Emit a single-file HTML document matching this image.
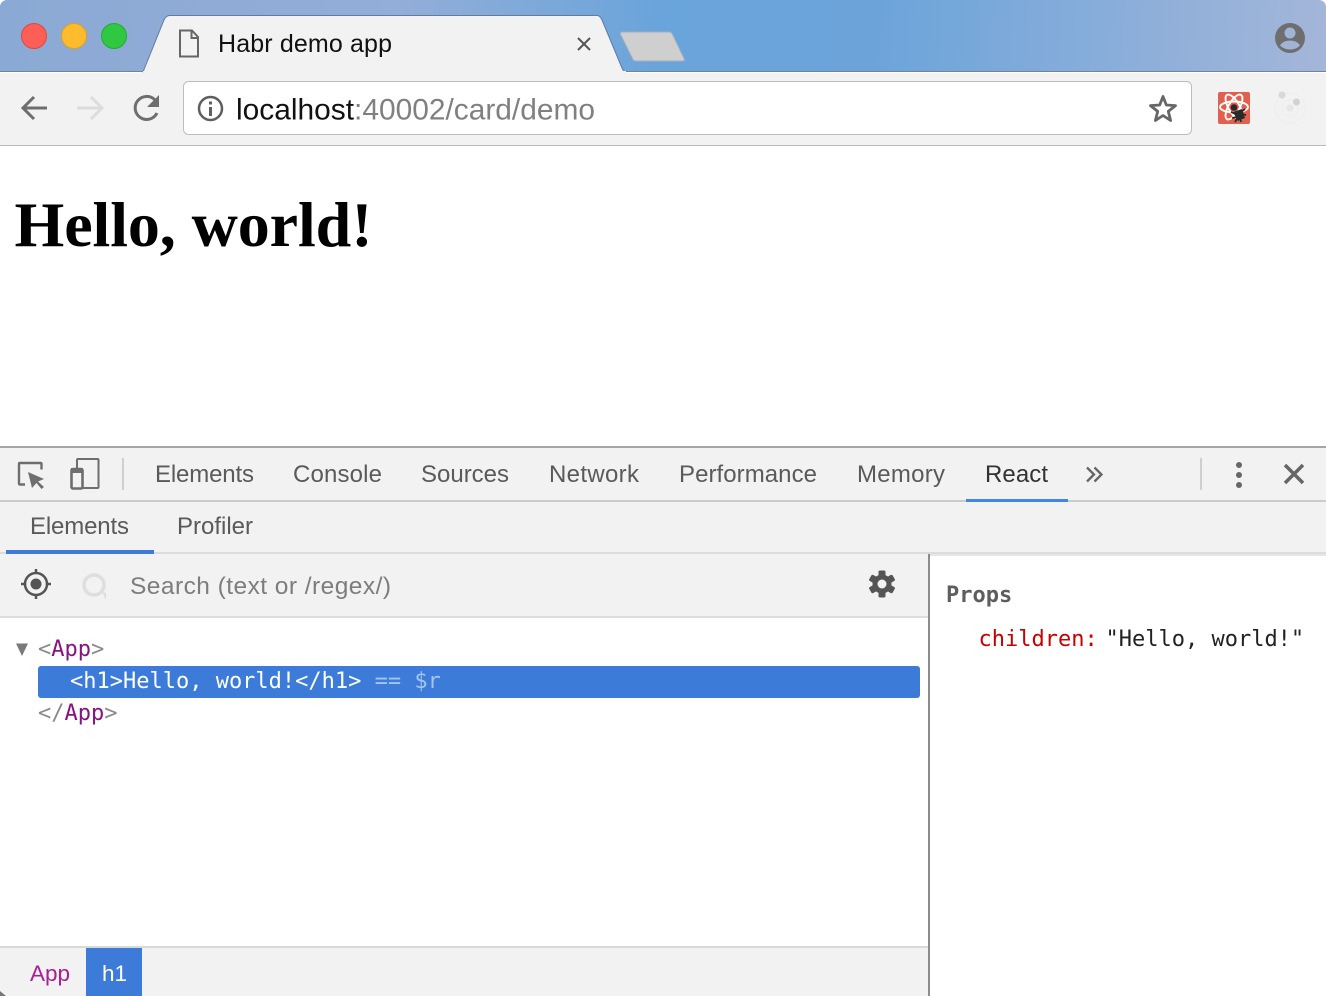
<!DOCTYPE html>
<html><head><meta charset="utf-8"><style>
html,body{margin:0;padding:0;background:#fff;width:1326px;height:996px;overflow:hidden}
svg{display:block}
.s{font-family:"Liberation Sans",sans-serif}
.m{font-family:"DejaVu Sans Mono",monospace;font-size:22px}
.t{font-size:24px;fill:#5a5a5a}
</style></head><body>
<svg width="1326" height="996" viewBox="0 0 1326 996" xmlns="http://www.w3.org/2000/svg">
<defs><linearGradient id="g" gradientUnits="userSpaceOnUse" x1="0" y1="0" x2="1326" y2="72">
<stop offset="0" stop-color="#8aa9d4"/><stop offset=".3" stop-color="#93aed8"/><stop offset=".5" stop-color="#69a4da"/><stop offset=".66" stop-color="#6ca4da"/><stop offset="1" stop-color="#a4b6d9"/></linearGradient></defs>
<rect width="1326" height="996" fill="#fff"/>
<!-- title bar -->
<rect width="1326" height="72" fill="url(#g)"/>
<path d="M0 6V0H6Q1 1 0 6ZM1326 6V0H1320Q1325 1 1326 6Z" fill="#fff"/>
<rect y="71" width="1326" height="1" fill="#6f83a3"/>
<circle cx="34" cy="36" r="12.500" fill="#fd5f57" stroke="#e2463f"/>
<circle cx="74" cy="36" r="12.500" fill="#febb2e" stroke="#dfa023"/>
<circle cx="114" cy="36" r="12.500" fill="#2fc840" stroke="#24ab30"/>
<!-- tab -->
<path d="M143 72L164 20Q166 15.500 170 15.500H597Q600 15.500 602 20L622 68Q623.500 71.500 626 72Z" fill="#f2f2f2" stroke="#5f7ca3" stroke-width="1"/>
<rect x="143" y="71" width="483" height="2" fill="#f2f2f2"/>
<path d="M180 30.500H192L198 37V56.500H180ZM191.500 31V38H198" fill="none" stroke="#666" stroke-width="2"/>
<text x="218" y="52" class="s" font-size="25" fill="#111" textLength="174" lengthAdjust="spacing">Habr demo app</text>
<path d="M578 38L590 50M590 38L578 50" stroke="#555" stroke-width="2" fill="none"/>
<path d="M622.500 32H669Q671.500 32 672.500 34.500L684 58.500Q685 61 682.500 61H636Q633.500 61 632.500 58.500L620.500 34.500Q620 32 622.500 32Z" fill="#cfcfcf" stroke="#9fb0c6" stroke-width="1"/>
<!-- avatar -->
<circle cx="1290" cy="38" r="15" fill="#6e6e6e"/>
<circle cx="1290" cy="33" r="5.500" fill="#a1b4d8"/>
<path d="M1280 45.500Q1283 40.500 1290 40.500Q1297 40.500 1300 45.500Q1296 49.500 1290 49.500Q1284 49.500 1280 45.500Z" fill="#a1b4d8"/>
<!-- toolbar -->
<rect y="73" width="1326" height="72" fill="#f2f2f2"/>
<rect y="145" width="1326" height="1" fill="#b9b9b9"/>
<path d="M47 108H23M34 97L23 108L34 119" fill="none" stroke="#6e6e6e" stroke-width="3"/>
<path d="M77 108H102M91 97L102 108L91 119" fill="none" stroke="#dcdcdc" stroke-width="3"/>
<path d="M157 113A11.500 11.500 0 1 1 155 100" fill="none" stroke="#6e6e6e" stroke-width="3"/>
<path d="M159 95V107H147Z" fill="#6e6e6e"/>
<rect x="183.500" y="81.500" width="1008" height="53" rx="5" fill="#fff" stroke="#bdbdbd"/>
<circle cx="210.500" cy="108.500" r="11.500" fill="none" stroke="#5f5f5f" stroke-width="2.500"/>
<rect x="209" y="107" width="3" height="9" fill="#5f5f5f"/><rect x="209" y="101.500" width="3" height="3" fill="#5f5f5f"/>
<text x="236" y="119.500" class="s" font-size="29.900" fill="#111" textLength="359">localhost<tspan fill="#808080">:40002/card/demo</tspan></text>
<path d="M1163 96.500L1166.300 105L1175.500 105.600L1168.300 111.400L1170.600 120.500L1163 115.500L1155.400 120.500L1157.700 111.400L1150.500 105.600L1159.700 105Z" fill="none" stroke="#666" stroke-width="2.800" stroke-linejoin="round"/>
<!-- react ext -->
<rect x="1218" y="92" width="32" height="32" rx="2" fill="#e2604d"/>
<g fill="none" stroke="#fff" stroke-width="1.900">
<ellipse cx="1234" cy="107" rx="14" ry="5.500"/>
<ellipse cx="1234" cy="107" rx="14" ry="5.500" transform="rotate(60 1234 107)"/>
<ellipse cx="1234" cy="107" rx="14" ry="5.500" transform="rotate(120 1234 107)"/></g>
<circle cx="1234" cy="107.500" r="3.300" fill="#2a2a2a"/>
<path d="M1233 112L1242 109L1245 118L1238 121Z" fill="#2a2a2a"/>
<path d="M1231 112L1236 114M1232 118L1237 117M1235 122L1238 117M1241 122L1240 116M1246 115L1241 114M1245 109L1241 112" stroke="#2a2a2a" stroke-width="1.800"/>
<!-- dim ext -->
<circle cx="1290" cy="108" r="15" fill="none" stroke="#ececec" stroke-width="1.500" stroke-dasharray="2 1.500"/>
<circle cx="1290" cy="108" r="8" fill="none" stroke="#ececec" stroke-width="1.500" stroke-dasharray="2 1.500"/>
<circle cx="1290" cy="108" r="3.500" fill="#e6e6e6"/>
<circle cx="1282" cy="95" r="3.500" fill="#d8d8d8"/>
<circle cx="1296.500" cy="102" r="3.500" fill="#d2d2d2"/>
<!-- page -->
<text x="14.500" y="246" font-family="'Liberation Serif',serif" font-weight="bold" font-size="64" fill="#000" textLength="358">Hello, world!</text>
<!-- devtools top -->
<rect y="446" width="1326" height="2" fill="#a5a5a5"/>
<rect y="448" width="1326" height="106" fill="#f2f2f2"/>
<rect y="500" width="1326" height="2" fill="#cbcbcb"/>
<path d="M25 484.500H20Q19 484.500 19 483.500V464Q19 463 20 463H40.500Q41.500 463 41.500 464V469.500" fill="none" stroke="#6e6e6e" stroke-width="2.400"/>
<path d="M28 472L44 479L38 481.500L44 487L41.500 489L36.500 483L32 488Z" fill="#6e6e6e"/>
<path d="M77 468V460Q77 459 78 459H97.500Q98.500 459 98.500 460V487Q98.500 488 97.500 488H83" fill="none" stroke="#6e6e6e" stroke-width="2"/>
<rect x="71.500" y="469" width="11" height="19.500" rx="1.500" fill="none" stroke="#6e6e6e" stroke-width="2.600"/>
<rect x="71" y="468" width="12" height="5" fill="#6e6e6e"/>
<rect x="122" y="458" width="2" height="32" fill="#cfcfcf"/>
<g class="s t">
<text x="155" y="482" class="s t" textLength="99">Elements</text>
<text x="293" y="482" class="s t" textLength="89">Console</text>
<text x="421" y="482" class="s t" textLength="88">Sources</text>
<text x="549" y="482" class="s t" textLength="90">Network</text>
<text x="679" y="482" class="s t" textLength="138">Performance</text>
<text x="857" y="482" class="s t" textLength="88">Memory</text>
<text x="985" y="482" class="s t" style="fill:#333" textLength="63">React</text>
</g>
<rect x="966" y="499" width="102" height="3" fill="#4285e8"/>
<path d="M1087 467.500L1094 474.500L1087 481.500M1094.500 467.500L1101.500 474.500L1094.500 481.500" fill="none" stroke="#666" stroke-width="2.300"/>
<rect x="1200" y="458" width="2" height="32" fill="#cfcfcf"/>
<circle cx="1239" cy="465" r="3" fill="#666"/><circle cx="1239" cy="475" r="3" fill="#666"/><circle cx="1239" cy="485" r="3" fill="#666"/>
<path d="M1285 465L1303 483M1303 465L1285 483" stroke="#666" stroke-width="3.500"/>
<!-- sub tabs -->
<rect y="552" width="1326" height="2" fill="#dcdcdc"/>
<rect x="6" y="550" width="148" height="4" fill="#3c7cd8"/>
<text x="30" y="534" class="s t" textLength="99">Elements</text>
<text x="177" y="534" class="s t" textLength="76">Profiler</text>
<!-- search -->
<rect y="554" width="929" height="62" fill="#f2f2f2"/>
<rect y="616" width="929" height="2" fill="#dcdcdc"/>
<rect x="929" y="554" width="397" height="2" fill="#e6e6e6"/>
<circle cx="36" cy="584" r="11" fill="none" stroke="#555" stroke-width="2.500"/>
<circle cx="36" cy="584" r="5.500" fill="#555"/>
<path d="M36 569V574M36 594V599M21 584H26M46 584H51" stroke="#555" stroke-width="2.500"/>
<circle cx="94" cy="585" r="10" fill="none" stroke="#dedede" stroke-width="3.500"/>
<path d="M102 592L106 600V593Z" fill="#dedede"/>
<text x="130" y="594" class="s" font-size="24.500" fill="#7d7d7d" textLength="261">Search (text or /regex/)</text>
<g transform="translate(882,584)" fill="#555">
<circle r="9.500"/>
<g><rect x="-3.500" y="-13.500" width="7" height="27" rx="1.500"/>
<rect x="-3.500" y="-13.500" width="7" height="27" rx="1.500" transform="rotate(60)"/>
<rect x="-3.500" y="-13.500" width="7" height="27" rx="1.500" transform="rotate(120)"/></g>
<circle r="4.500" fill="#f2f2f2"/>
</g>
<!-- tree -->
<path d="M16 643.500H28L22 656Z" fill="#7a7a7a"/>
<text x="38" y="656" class="m" fill="#8a8a8a">&lt;<tspan fill="#881280">App</tspan>&gt;</text>
<rect x="38" y="666" width="882" height="32" rx="3" fill="#3d7bd9"/>
<text x="70" y="688" class="m" fill="#fff">&lt;h1&gt;Hello, world!&lt;/h1&gt; <tspan fill="#a4c3ef">== $r</tspan></text>
<text x="38" y="720" class="m" fill="#8a8a8a">&lt;/<tspan fill="#881280">App</tspan>&gt;</text>
<!-- divider -->
<rect x="928" y="554" width="2" height="442" fill="#8c8c8c"/>
<!-- props -->
<text x="946" y="602" class="m" font-weight="bold" fill="#5e5e5e">Props</text>
<text x="978.500" y="646" class="m" fill="#c80000">children:</text>
<text x="1105.500" y="646" class="m" fill="#222">"Hello, world!"</text>
<!-- bottom -->
<rect y="946" width="928" height="2" fill="#d8d8d8"/>
<rect y="948" width="928" height="48" fill="#f2f2f2"/>
<text x="30" y="981" class="s" font-size="22.500" fill="#ab1f93">App</text>
<rect x="86" y="948" width="56" height="48" fill="#3d7bd9"/>
<text x="102" y="981" class="s" font-size="22.500" fill="#fff">h1</text>
<path d="M0 991L6 996H0Z" fill="#777"/>
</svg>
</body></html>
